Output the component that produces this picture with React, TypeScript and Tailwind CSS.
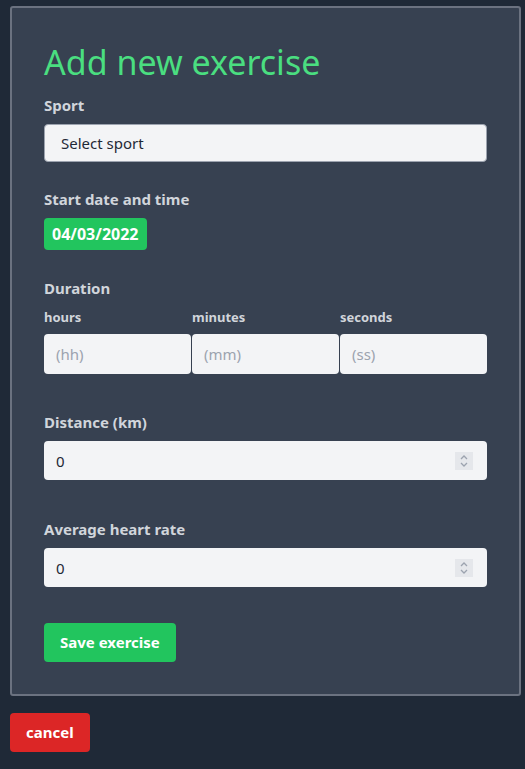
import { useState } from 'react'

const font = { fontFamily: '"Noto Sans", "Open Sans", sans-serif' }

function Spinner() {
  // static up/down stepper, always visible as in the reference
  return (
    <div className="pointer-events-none absolute right-[14px] top-1/2 flex h-[18px] w-[18px] -translate-y-1/2 items-center justify-center bg-[#e5e7eb]">
      <svg width="10" height="14" viewBox="0 0 10 14" fill="none" stroke="#9ca3af" strokeWidth="1.3">
        <path d="M2 5 L5 2 L8 5" />
        <path d="M2 9 L5 12 L8 9" />
      </svg>
    </div>
  )
}

function Label({ children, className = '' }: { children: React.ReactNode; className?: string }) {
  return <label className={`block text-[15px] font-bold leading-6 text-[#d1d5db] ${className}`}>{children}</label>
}

export default function App() {
  const [distance, setDistance] = useState('0')
  const [heartRate, setHeartRate] = useState('0')

  return (
    <div className="min-h-[769px] bg-[#1f2937] pt-[6px]" style={font}>
      <div className="ml-[10px] w-[511px] rounded-[3px] border-2 border-[#6b7280] bg-[#374151] px-8 pb-8 pt-[32px]">
        <h1 className="text-[34px] leading-[44px] text-[#4ade80]">Add new exercise</h1>

        <Label className="mt-[9px]">Sport</Label>
        <div className="mt-[7px] flex h-[38px] items-center rounded-[4px] border border-[#9ca3af] bg-[#f3f4f6] px-4 text-[15px] text-[#1f2937]">
          Select sport
        </div>

        <Label className="mt-[25px]">Start date and time</Label>
        <button className="mt-[7px] flex h-[32px] items-center rounded-[4px] bg-[#22c55e] px-[8px] text-[16px] font-bold text-white">
          04/03/2022
        </button>

        <Label className="mt-[26px]">Duration</Label>
        <div className="mt-[7px] grid grid-cols-3 gap-px">
          {[
            ['hours', '(hh)'],
            ['minutes', '(mm)'],
            ['seconds', '(ss)'],
          ].map(([name, ph]) => (
            <div key={name}>
              <div className="text-[13px] font-bold leading-5 text-[#d1d5db]">{name}</div>
              <input
                placeholder={ph}
                className="mt-[7px] h-[40px] w-full rounded-[4px] bg-[#f3f4f6] px-3 text-[15px] text-[#1f2937] outline-none placeholder:text-[#9ca3af]"
              />
            </div>
          ))}
        </div>

        <Label className="mt-[36px]">Distance (km)</Label>
        <div className="relative mt-[7px]">
          <input
            value={distance}
            onChange={(e) => setDistance(e.target.value)}
            className="h-[39px] w-full rounded-[4px] bg-[#f3f4f6] px-3 text-[15px] text-[#1f2937] outline-none"
          />
          <Spinner />
        </div>

        <Label className="mt-[37px]">Average heart rate</Label>
        <div className="relative mt-[7px]">
          <input
            value={heartRate}
            onChange={(e) => setHeartRate(e.target.value)}
            className="h-[39px] w-full rounded-[4px] bg-[#f3f4f6] px-3 text-[15px] text-[#1f2937] outline-none"
          />
          <Spinner />
        </div>

        <button className="mt-[36px] flex h-[39px] items-center rounded-[4px] bg-[#22c55e] px-4 text-[15px] font-bold text-white">
          Save exercise
        </button>
      </div>

      <button className="ml-[10px] mt-[17px] flex h-[39px] items-center rounded-[4px] bg-[#dc2626] px-4 text-[15px] font-bold text-white">
        cancel
      </button>
    </div>
  )
}
